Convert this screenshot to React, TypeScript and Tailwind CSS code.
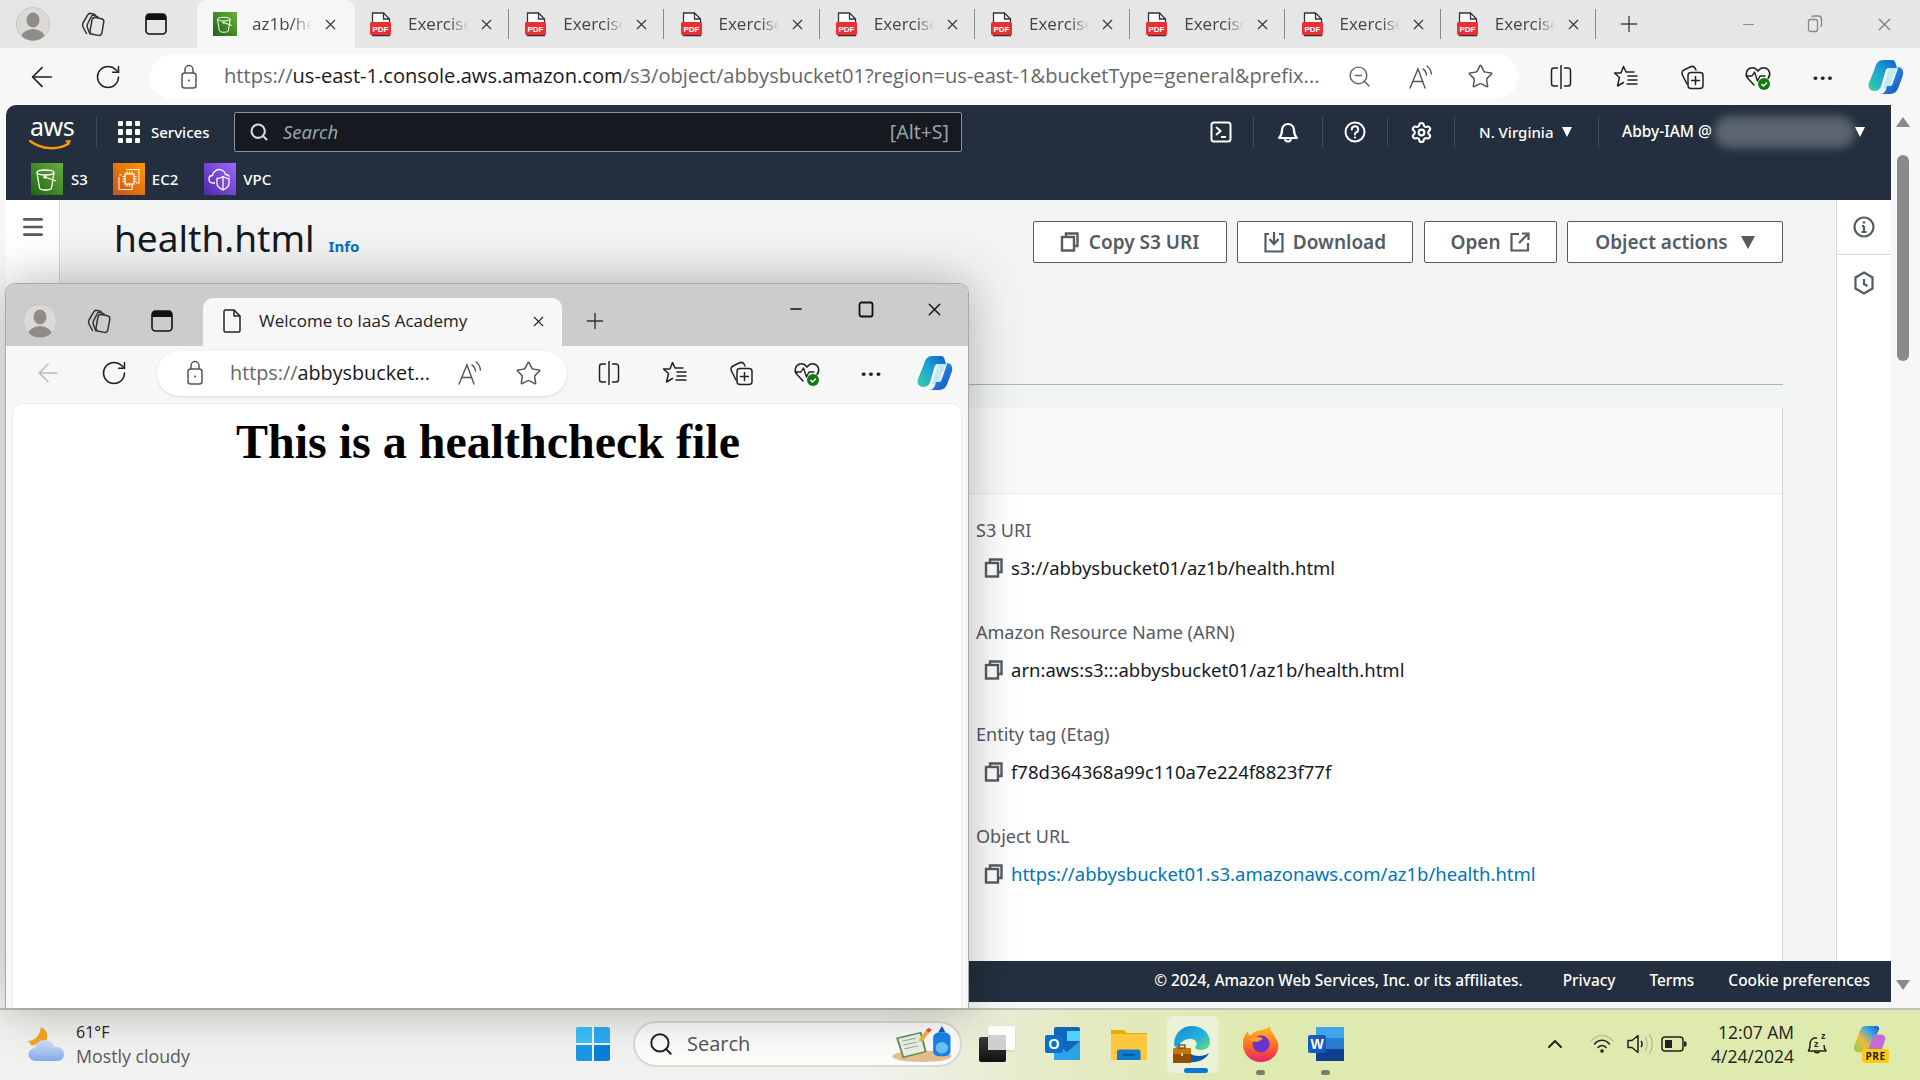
import {
  ArrowLeft,
  ChevronUp,
  Menu,
  Minus,
  Plus,
  RotateCw,
  Search,
  Settings,
  Star,
  X,
  ZoomOut,
} from "lucide-react";

const awsFont = "font-['Noto_Sans',sans-serif]";

const Avatar = () => (
  <svg width="34" height="34" viewBox="0 0 34 34">
    <defs>
      <clipPath id="av">
        <circle cx="17" cy="17" r="16.5" />
      </clipPath>
    </defs>
    <circle cx="17" cy="17" r="16.5" fill="#dcdad6" stroke="#c8c6c2" />
    <g clipPath="url(#av)" fill="#8f8b86">
      <ellipse cx="17" cy="13" rx="6.5" ry="7.5" />
      <ellipse cx="17" cy="31" rx="12" ry="9" />
    </g>
  </svg>
);

const Workspaces = () => (
  <svg width="26" height="26" viewBox="0 0 26 26" fill="none" stroke="#333" strokeWidth="1.5" strokeLinejoin="round" strokeLinecap="round">
    <path d="M15 3.500 11 2.500c-1.500-.4-2.700.3-3.400 1.600L3 12c-.8 1.500-.6 2.600 0 4l3.500 6.500" />
    <path d="M18 6 14.500 4.500c-1.500-.6-2.800 0-3.500 1.500L7.500 13c-.6 1.400-.6 2.500 0 4l2.500 6" />
    <rect x="11" y="7" width="12" height="17" rx="3" transform="rotate(10 17 15)" />
  </svg>
);

const VerticalTabs = () => (
  <svg width="24" height="24" viewBox="0 0 24 24" fill="none">
    <rect x="2" y="2" width="20" height="20" rx="3.500" stroke="#111" strokeWidth="1.600" />
    <path d="M2 6a4 4 0 0 1 4-4h12a4 4 0 0 1 4 4v2H2z" fill="#111" />
  </svg>
);

const PdfIcon = () => (
  <svg width="23" height="25" viewBox="0 0 23 25">
    <path d="M3.500 1h11l6 6v16.500H3.500z" fill="#fff" stroke="#333" strokeWidth="1.300" />
    <path d="M14.500 1v6h6" fill="none" stroke="#333" strokeWidth="1.300" />
    <rect x="1" y="10" width="21" height="13" rx="1.500" fill="#ee2d34" />
    <text x="11.500" y="19.500" textAnchor="middle" fontSize="8" fontWeight="700" fill="#fff" fontFamily="Liberation Sans, sans-serif">
      PDF
    </text>
  </svg>
);

const S3Icon = ({ size = 32 }: { size?: number }) => (
  <svg width={size} height={size} viewBox="0 0 32 32">
    <defs>
      <linearGradient id="s3g" x1="0" y1="1" x2="1" y2="0">
        <stop offset="0" stopColor="#1b660f" />
        <stop offset="1" stopColor="#6cae3e" />
      </linearGradient>
    </defs>
    <rect width="32" height="32" fill="url(#s3g)" />
    <g fill="none" stroke="#fff" strokeWidth="1.300">
      <ellipse cx="14.500" cy="9.500" rx="8.500" ry="2.500" />
      <path d="M6 9.500 8.500 25c.5 1.500 3 2 6 2s5.500-.5 6-2L23 9.500" />
      <path d="M14 14l11 4" />
      <circle cx="14" cy="14" r="1" />
    </g>
  </svg>
);

const Ec2Icon = () => (
  <svg width="32" height="32" viewBox="0 0 32 32">
    <defs>
      <linearGradient id="ec2g" x1="0" y1="1" x2="1" y2="0">
        <stop offset="0" stopColor="#c8511b" />
        <stop offset="1" stopColor="#ff9900" />
      </linearGradient>
    </defs>
    <rect width="32" height="32" fill="url(#ec2g)" />
    <g fill="none" stroke="#fff" strokeWidth="1.200">
      <path d="M13 6.500h13V20h-3" opacity=".85" />
      <path d="M6 12h3M6 26.500V14M6 26.500h13V23" opacity=".85" />
      <rect x="12" y="11" width="9" height="10" />
      <path d="M14 8.500V11M16.500 8.500V11M19 8.500V11M14 21v2.500M16.500 21v2.500M19 21v2.500M9.500 13.500H12M9.500 16H12M9.500 18.500H12M21 13.500h2.500M21 16h2.500M21 18.500h2.500" />
    </g>
  </svg>
);

const VpcIcon = () => (
  <svg width="32" height="32" viewBox="0 0 32 32">
    <defs>
      <linearGradient id="vpcg" x1="0" y1="1" x2="1" y2="0">
        <stop offset="0" stopColor="#4d27a8" />
        <stop offset="1" stopColor="#a166ff" />
      </linearGradient>
    </defs>
    <rect width="32" height="32" fill="url(#vpcg)" />
    <g fill="none" stroke="#fff" strokeWidth="1.300">
      <path d="M11 20H9c-3 0-4-2-4-4s1.500-3.500 3.500-3.500C9 9 12 6.500 15 6.500c3.500 0 6 2.500 6.500 5 1.500 0 3 .5 4 2" />
      <path d="M19 13.500c2 1.500 4 2 6 2v5c0 3-3 5-6 6.500-3-1.500-6-3.500-6-6.500v-5c2 0 4-.5 6-2z" />
      <path d="M19 13.500V27" />
    </g>
  </svg>
);

const ReadAloud = () => (
  <svg width="26" height="26" viewBox="0 0 26 26" fill="none" stroke="#555" strokeWidth="1.400" strokeLinecap="round">
    <path d="M2 24 10 5l7 19M5 17.500h10" />
    <path d="M15 5c2 1 3 3 3.500 6M19 2c2.500 1.500 4 5 4.500 8" />
  </svg>
);

const SplitScreen = () => (
  <svg width="24" height="26" viewBox="0 0 24 26" fill="none" stroke="#222" strokeWidth="1.500" strokeLinejoin="round">
    <path d="M12 1v24" />
    <path d="M9 4H5a2.500 2.500 0 0 0-2.500 2.500v13A2.500 2.500 0 0 0 5 22h4M15 4h4a2.500 2.500 0 0 1 2.500 2.500v13A2.500 2.500 0 0 1 19 22h-4" />
  </svg>
);

const FavStar = () => (
  <svg width="26" height="26" viewBox="0 0 26 26" fill="none" stroke="#222" strokeWidth="1.500" strokeLinejoin="round" strokeLinecap="round">
    <path d="M21 8h-8L10.500 2.500 8 9H1.500l5 4.500L4.500 22l6-3.500" />
    <path d="M15 12h9M15 16h9M14 20h10" />
  </svg>
);

const Collections = () => (
  <svg width="26" height="28" viewBox="0 0 26 28" fill="none" stroke="#222" strokeWidth="1.500" strokeLinejoin="round" strokeLinecap="round">
    <path d="M8 21 3.500 12c-1-2-.5-4 1.500-5l6-3c2-1 4-.5 5 1l1 2" />
    <rect x="9" y="9.500" width="15" height="16" rx="3" />
    <path d="M16.500 13.500v8M12.500 17.500h8" />
  </svg>
);

const Health = () => (
  <svg width="28" height="28" viewBox="0 0 28 28" fill="none">
    <path
      d="M10 22 4 15.500C1 12 2 6 7 5c2.500-.5 5 .5 7 3 2-2.500 4.500-3.500 7-3 5 1 6 7 3 10.500"
      stroke="#222"
      strokeWidth="1.500"
      strokeLinecap="round"
    />
    <path d="M2 13h6l2.500-4 3 9 2.500-5h5" stroke="#222" strokeWidth="1.400" strokeLinejoin="round" strokeLinecap="round" />
    <circle cx="20" cy="21" r="6" fill="#107c10" />
    <path d="m17.500 21 2 2 3.500-3.500" stroke="#fff" strokeWidth="1.400" fill="none" />
  </svg>
);

const Copilot = ({ id, size = 36 }: { id: string; size?: number }) => (
  <svg width={size} height={size} viewBox="0 0 36 36">
    <defs>
      <linearGradient id={`${id}a`} x1="0" y1="1" x2="1" y2="0">
        <stop offset="0" stopColor="#37d0a0" />
        <stop offset=".55" stopColor="#1a9fd9" />
        <stop offset="1" stopColor="#0b63c5" />
      </linearGradient>
      <linearGradient id={`${id}b`} x1="0" y1="0" x2="1" y2="1">
        <stop offset="0" stopColor="#36b4ee" />
        <stop offset="1" stopColor="#1246c4" />
      </linearGradient>
    </defs>
    <path d="M21 9h8l-8 20h-6z" fill="#bfeaf2" />
    <path d="M15 1h9c2 0 3 1 3.500 3L29 9h-8c-2 0-3 1-3.500 3l-4 14c-.8 3-3 6-7 6-5 0-7-4-5.500-8L7 9c1-5 4-8 8-8z" fill={`url(#${id}a)`} />
    <path d="M30 8c4 0 6 4 5 8l-4 11c-1.500 5-4.500 8-9 8H12c3 0 5-2 6-4.500L19 27h3c1 0 2-1 2.500-2L29 12z" fill={`url(#${id}b)`} />
  </svg>
);

const BrowserTab = () => (
  <div className="flex h-[48px] w-[155.250px] shrink-0 items-center">
    <div className="ml-[14px] flex w-[23px] shrink-0 items-center">
      <PdfIcon />
    </div>
    <span className="ml-[16px] w-[60px] overflow-hidden whitespace-nowrap text-[17px] text-[#444] [mask-image:linear-gradient(to_right,black_70%,transparent)]">
      Exercise
    </span>
    <X className="ml-[10px] shrink-0 text-[#333]" size={17} strokeWidth={1.500} />
    <div className="ml-[13px] h-[30px] w-px bg-[#8a8a8a]" />
  </div>
);

const TabStrip = () => (
  <div className="flex h-[48px] items-center bg-[#e6e6e6]">
    <div className="ml-[16px] flex w-[34px] justify-center">
      <Avatar />
    </div>
    <div className="ml-[30px] flex w-[26px] justify-center">
      <Workspaces />
    </div>
    <div className="ml-[38px] flex w-[24px] justify-center">
      <VerticalTabs />
    </div>
    <div className="ml-[29px] flex h-[48px] w-[158px] shrink-0 items-center rounded-t-[10px] bg-[#f7f7f7]">
      <div className="ml-[16px]">
        <S3Icon size={24} />
      </div>
      <span className="ml-[15px] w-[60px] overflow-hidden whitespace-nowrap text-[17px] text-[#444] [mask-image:linear-gradient(to_right,black_65%,transparent)]">
        az1b/health
      </span>
      <X className="ml-[10px] shrink-0 text-[#333]" size={17} strokeWidth={1.500} />
    </div>
    {[0, 1, 2, 3, 4, 5, 6, 7].map((i) => (
      <BrowserTab key={i} />
    ))}
    <Plus className="ml-[19px] shrink-0 text-[#444]" size={26} strokeWidth={1.300} />
    <Minus className="ml-[98px] shrink-0 text-[#888]" size={17} strokeWidth={1.500} />
    <svg className="ml-[50px] shrink-0" width="16" height="18" viewBox="0 0 16 18" fill="none" stroke="#888" strokeWidth="1.300">
      <rect x="1.500" y="4.500" width="9" height="12" rx="2" />
      <path d="M5 2.500c0-1 .5-1.500 1.500-1.500h5c2 0 3 1 3 3v6c0 1-.5 1.500-1.500 1.500" />
    </svg>
    <X className="ml-[51px] shrink-0 text-[#777]" size={21} strokeWidth={1.300} />
  </div>
);

const ToolSlot = ({ children, width = 65.600 }: { children: React.ReactNode; width?: number }) => (
  <div className="flex shrink-0 items-center justify-center" style={{ width }}>
    {children}
  </div>
);

const Lock = () => (
  <svg width="20" height="26" viewBox="0 0 20 26" fill="none" stroke="#555" strokeWidth="1.500">
    <rect x="3" y="9" width="14" height="15" rx="2.500" />
    <path d="M6 9V5.500a4 4 0 0 1 8 0V9" />
    <circle cx="10" cy="16.500" r="1" fill="#555" stroke="none" />
  </svg>
);

const Toolbar = () => (
  <div className="flex h-[57px] items-center bg-[#f7f7f7]">
    <div className="flex w-[150px] items-center">
      <ArrowLeft className="ml-[26px] text-[#222]" size={32} strokeWidth={1.300} />
      <RotateCw className="ml-[36px] text-[#222]" size={28} strokeWidth={1.300} />
    </div>
    <div className="flex h-[45px] w-[1368px] items-center rounded-full bg-white">
      <div className="ml-[29px] w-[20px]">
        <Lock />
      </div>
      <div className="ml-[25px] w-[1100px] whitespace-nowrap text-[20.100px] text-[#666]">
        https://<span className="text-[#1a1a1a]">us-east-1.console.aws.amazon.com</span>
        /s3/object/abbysbucket01?region=us-east-1&amp;bucketType=general&amp;prefix...
      </div>
      <ZoomOut className="ml-[23px] text-[#666]" size={25} strokeWidth={1.400} />
      <div className="ml-[36px]">
        <ReadAloud />
      </div>
      <Star className="ml-[33px] text-[#555]" size={27} strokeWidth={1.300} />
    </div>
    <div className="ml-[10px] flex">
      <ToolSlot>
        <SplitScreen />
      </ToolSlot>
      <ToolSlot>
        <FavStar />
      </ToolSlot>
      <ToolSlot>
        <Collections />
      </ToolSlot>
      <ToolSlot>
        <Health />
      </ToolSlot>
      <ToolSlot>
        <span className="text-[22px] font-bold leading-none tracking-[1px] text-[#222]">···</span>
      </ToolSlot>
      <div className="ml-[12px]">
        <Copilot id="mainco" />
      </div>
    </div>
  </div>
);

const NavBox = ({ children, w }: { children: React.ReactNode; w: number }) => (
  <div className="flex h-[30px] shrink-0 items-center justify-center border-r border-[#414d5c]" style={{ width: w }}>
    {children}
  </div>
);

const AwsNav = () => (
  <div className="h-[95px] shrink-0 bg-[#232f3e] text-white">
    <div className="flex h-[55px] items-center pb-[1px]">
      <div className="relative ml-[24px] h-[40px] w-[42px] shrink-0">
        <span className="absolute left-0 top-[-2px] text-[25px] leading-[32px] tracking-[-0.5px] text-white">aws</span>
        <svg className="absolute left-[-1px] top-[27px]" width="44" height="12" viewBox="0 0 44 12" fill="none">
          <path d="M1 2c12 9 28 9 38 3" stroke="#ff9900" strokeWidth="2.400" strokeLinecap="round" />
          <path d="M36 1.500 42 1l-2 5.500z" fill="#ff9900" />
        </svg>
      </div>
      <div className="ml-[24px] h-[30px] w-px shrink-0 bg-[#414d5c]" />
      <div className="ml-[21px] grid h-[22px] w-[22px] shrink-0 grid-cols-3 gap-[3px]">
        {[0, 1, 2, 3, 4, 5, 6, 7, 8].map((i) => (
          <div key={i} className="rounded-[1px] bg-white" />
        ))}
      </div>
      <span className="ml-[11px] w-[60px] shrink-0 text-[15px] font-medium">Services</span>
      <div className="ml-[23px] flex h-[40px] w-[728px] shrink-0 items-center rounded-[2px] border border-[#879596] bg-[#16191f]">
        <Search className="ml-[14px] text-[#d5dbdb]" size={20} strokeWidth={2.500} />
        <span className="ml-[14px] flex-1 text-[18.500px] italic text-[#95a5a6]">Search</span>
        <span className="mr-[12px] text-[19.500px] text-[#95a5a6]">[Alt+S]</span>
      </div>
      <div className="ml-[226px] flex items-center">
        <NavBox w={66}>
          <svg width="22" height="22" viewBox="0 0 22 22" fill="none" stroke="#fff" strokeWidth="2">
            <rect x="1.500" y="1.500" width="19" height="19" rx="2.500" />
            <path d="m6 6 4.500 4L6 14M11 16h5" />
          </svg>
        </NavBox>
        <NavBox w={69}>
          <svg width="22" height="24" viewBox="0 0 22 24" fill="none" stroke="#fff" strokeWidth="2.200" strokeLinejoin="round">
            <path d="M2 18c2-2 3-4 3-8a6 6 0 0 1 12 0c0 4 1 6 3 8z" />
            <path d="M8 18.500a3 3 0 0 0 6 0" />
          </svg>
        </NavBox>
        <NavBox w={65}>
          <svg width="22" height="22" viewBox="0 0 22 22" fill="none" stroke="#fff" strokeWidth="2">
            <circle cx="11" cy="11" r="9.500" />
            <path d="M7.800 8.500A3.200 3.200 0 1 1 12 11.500c-.8.4-1 .9-1 2" strokeLinecap="round" />
            <circle cx="11" cy="16.500" r="1.100" fill="#fff" stroke="none" />
          </svg>
        </NavBox>
        <NavBox w={67}>
          <Settings size={23} strokeWidth={2.200} />
        </NavBox>
        <div className="flex h-[30px] w-[144px] shrink-0 items-center border-r border-[#414d5c] pl-[24px] text-[15px] font-medium">
          N. Virginia
          <span className="ml-[9px] h-0 w-0 border-x-[5.500px] border-t-[10px] border-x-transparent border-t-white" />
        </div>
        <div className="relative flex h-[30px] w-[286px] shrink-0 items-center pl-[23px] text-[15.500px] font-medium">
          Abby-IAM @
          <div className="absolute left-[115px] top-[-1px] h-[32px] w-[141px] rounded-full bg-[#5b6570] blur-[5px]" />
          <span className="absolute left-[256px] top-[10px] h-0 w-0 border-x-[5.500px] border-t-[10px] border-x-transparent border-t-white" />
        </div>
      </div>
    </div>
    <div className="flex h-[40px] items-start pt-[3px] text-[15px] font-medium">
      <div className="ml-[25px] flex items-center">
        <S3Icon />
        <span className="ml-[8px] leading-[30px]">S3</span>
      </div>
      <div className="ml-[25px] flex items-center">
        <Ec2Icon />
        <span className="ml-[7px] leading-[30px]">EC2</span>
      </div>
      <div className="ml-[26px] flex items-center">
        <VpcIcon />
        <span className="ml-[7px] leading-[30px]">VPC</span>
      </div>
    </div>
  </div>
);

const CopyIcon = ({ color = "#545b64" }: { color?: string }) => (
  <svg width="20" height="20" viewBox="0 0 20 20" fill="none" stroke={color} strokeWidth="2.400">
    <path d="M6 4V1.500h11.500V14H14" />
    <rect x="2" y="5" width="12" height="13.500" />
  </svg>
);

const ActionButton = ({ children, w }: { children: React.ReactNode; w: number }) => (
  <div
    className="flex h-[42px] items-center justify-center gap-[9px] rounded-[2px] border border-[#545b64] bg-white text-[19px] font-semibold text-[#545b64]"
    style={{ width: w }}
  >
    {children}
  </div>
);

const Field = ({ label, value, link }: { label: string; value: string; link?: boolean }) => (
  <div className="h-[102px]">
    <div className="h-[24px] text-[18px] leading-[24px] text-[#545b64]">{label}</div>
    <div className="mt-[14px] flex h-[24px] items-center pl-[8px]">
      <CopyIcon />
      <span className={`ml-[7px] text-[18.500px] leading-[24px] ${link ? "text-[#0073bb]" : "text-[#16191f]"}`}>{value}</span>
    </div>
  </div>
);

const Console = () => (
  <div className={`flex h-[897px] w-[1885px] shrink-0 flex-col overflow-hidden rounded-tl-[10px] ${awsFont}`}>
    <AwsNav />
    <div className="flex h-[761px] shrink-0">
      <div className="flex w-[54px] shrink-0 justify-center border-r border-[#d5dbdb] bg-white pt-[14px]">
        <Menu className="text-[#545b64]" size={26} strokeWidth={2.500} />
      </div>
      <div className="flex min-w-0 flex-1 flex-col bg-[#f2f3f3] pl-[54px] pr-[53px]">
        <div className="flex h-[63px] shrink-0 items-end justify-between">
          <div className="mb-[-2px] flex items-baseline">
            <h1 className="text-[37px] leading-[54px] text-[#16191f]">health.html</h1>
            <span className="ml-[14px] text-[15px] font-bold text-[#0073bb]">Info</span>
          </div>
          <div className="flex gap-[10.500px]">
            <ActionButton w={194}>
              <CopyIcon />
              Copy S3 URI
            </ActionButton>
            <ActionButton w={176}>
              <svg width="20" height="22" viewBox="0 0 20 22" fill="none" stroke="#545b64" strokeWidth="2.200">
                <path d="M5 3H1.500v17.500h17V3H15M10 1v11M5.500 8l4.500 5 4.500-5" />
              </svg>
              Download
            </ActionButton>
            <ActionButton w={133}>
              Open
              <svg width="20" height="20" viewBox="0 0 20 20" fill="none" stroke="#545b64" strokeWidth="2.200">
                <path d="M9 2H1.500v16.500h16.500V11M12 1.500h6.500V8M18 2 9 11" />
              </svg>
            </ActionButton>
            <ActionButton w={216}>
              Object actions
              <span className="ml-[4px] h-0 w-0 border-x-[7px] border-t-[13px] border-x-transparent border-t-[#545b64]" />
            </ActionButton>
          </div>
        </div>
        <div className="mt-[121px] shrink-0 border-b border-[#aab7b8]" />
        <div className="mt-[23px] flex min-h-0 flex-1 flex-col border-r border-[#d5dbdb] bg-white">
          <div className="h-[86px] shrink-0 border-b border-[#eaeded] bg-[#fafafa]" />
          <div className="pl-[862px] pt-[24px]">
            <Field label="S3 URI" value="s3://abbysbucket01/az1b/health.html" />
            <Field label="Amazon Resource Name (ARN)" value="arn:aws:s3:::abbysbucket01/az1b/health.html" />
            <Field label="Entity tag (Etag)" value="f78d364368a99c110a7e224f8823f77f" />
            <Field label="Object URL" value="https://abbysbucket01.s3.amazonaws.com/az1b/health.html" link />
          </div>
        </div>
      </div>
      <div className="w-[55px] shrink-0 border-l border-[#d5dbdb] bg-white">
        <div className="flex h-[55px] items-center justify-center border-b border-[#d5dbdb]">
          <svg width="22" height="22" viewBox="0 0 22 22" fill="none" stroke="#545b64" strokeWidth="2.200">
            <circle cx="11" cy="11" r="9.500" />
            <path d="M11 10v6M8.500 16h5M9 10h2" />
            <circle cx="11" cy="6.500" r="1.300" fill="#545b64" stroke="none" />
          </svg>
        </div>
        <div className="flex h-[56px] items-center justify-center">
          <svg width="20" height="24" viewBox="0 0 20 24" fill="none" stroke="#545b64" strokeWidth="2.200">
            <path d="M10 1.500 18.500 6.500v11L10 22.500 1.500 17.500v-11z" />
            <path d="M10 8v5l3.500 2" />
          </svg>
        </div>
      </div>
    </div>
    <div className="flex h-[41px] shrink-0 items-center justify-end bg-[#232f3e] pb-[2px] pr-[21px] text-[15.400px] font-medium text-white">
      <span>© 2024, Amazon Web Services, Inc. or its affiliates.</span>
      <span className="ml-[40px]">Privacy</span>
      <span className="ml-[34px]">Terms</span>
      <span className="ml-[34px]">Cookie preferences</span>
    </div>
  </div>
);

const Scrollbar = () => (
  <div className="flex h-[897px] w-[29px] shrink-0 flex-col items-center bg-[#f7f7f7] pr-[5px]">
    <span className="mt-[12px] h-0 w-0 border-x-[7px] border-b-[10px] border-x-transparent border-b-[#8a8a8a]" />
    <div className="mt-[28px] h-[206px] w-[12px] rounded-full bg-[#8a8a8a]" />
    <span className="mt-[619px] h-0 w-0 border-x-[7px] border-t-[10px] border-x-transparent border-t-[#8a8a8a]" />
  </div>
);

const WeatherIcon = () => (
  <svg width="36" height="35" viewBox="0 0 36 35">
    <defs>
      <linearGradient id="cloud" x1="0" y1="0" x2="0" y2="1">
        <stop offset="0" stopColor="#d5e3f7" />
        <stop offset="1" stopColor="#82a9ec" />
      </linearGradient>
    </defs>
    <path d="M13 0c6 3 8 9 5 14-1 1-1 2-1 2-4 0-10 1-13 3L0 14c6 0 12-5 13-14z" fill="#f6a623" />
    <path d="M8 34c-4.500 0-7.500-3-7.500-6.500S3.500 21 7 21c1-5 5-8 10-8 4.500 0 8 2.500 9 7 5-1 10 2 10 7s-3 7-7 7z" fill="url(#cloud)" />
  </svg>
);

const WindowsLogo = () => (
  <div className="grid h-[34px] w-[34px] shrink-0 grid-cols-2 gap-[2px]">
    <div className="rounded-tl-[2px] bg-[#3cc0f5]" />
    <div className="rounded-tr-[2px] bg-[#2bacef]" />
    <div className="rounded-bl-[2px] bg-[#1d97e8]" />
    <div className="rounded-br-[2px] bg-[#0a7fd8]" />
  </div>
);

const SearchArt = () => (
  <svg width="62" height="38" viewBox="0 0 50 40" preserveAspectRatio="none">
    <ellipse cx="25" cy="33" rx="24" ry="6" fill="#e4bd8c" />
    <path d="M5 14 24 8l4 20-18 6z" fill="#e9efe4" stroke="#5b8f55" strokeWidth="1.500" />
    <path d="M9 17l11-3M10 21l11-3M11 25l11-3" stroke="#8fa58c" strokeWidth="1" />
    <path d="m22 16 6-10 3 2-6 10z" fill="#f3b33c" />
    <path d="m28 6 2-3 3 2-2 3z" fill="#e4573d" />
    <rect x="34" y="8" width="14" height="25" rx="5" fill="#1a7fe8" />
    <path d="M38 8l3-7 3 7z" fill="#0c5fc4" />
    <ellipse cx="41" cy="24" rx="5" ry="6" fill="#66c4f5" />
  </svg>
);

const TaskView = () => (
  <div className="relative h-[36px] w-[36px] shrink-0">
    <div className="absolute left-[9px] top-0 h-[24px] w-[27px] rounded-[2px] bg-white shadow-sm" />
    <div className="absolute bottom-0 left-0 h-[25px] w-[27px] rounded-[2px] bg-[linear-gradient(180deg,#3a3a3a,#111)]" />
    <div className="absolute left-[9px] top-[9px] h-[15px] w-[18px] bg-[#cfcfcf]" />
  </div>
);

const OutlookIcon = () => (
  <svg width="36" height="36" viewBox="0 0 36 36">
    <rect x="9" y="1" width="26" height="33" rx="2" fill="#1066b8" />
    <rect x="22" y="5" width="13" height="10" fill="#4fd0ff" />
    <path d="M9 15 22 26 35 15v19H9z" fill="#2ea1e8" />
    <rect x="0" y="9" width="18" height="18" rx="2" fill="#0b6fd0" />
    <text x="9" y="23" textAnchor="middle" fontSize="14" fontWeight="700" fill="#fff" fontFamily="Liberation Sans, sans-serif">
      O
    </text>
  </svg>
);

const FolderIcon = () => (
  <svg width="36" height="32" viewBox="0 0 36 32">
    <path d="M0 2h13l3 3h20v27H0z" fill="#e9a90c" />
    <rect y="6" width="36" height="26" fill="#fdc83e" />
    <path d="M6 32V24c0-1.500 1-2.500 2.500-2.500H27c1.500 0 2.500 1 2.500 2.500v8z" fill="#0d7ccb" />
    <rect x="12" y="26" width="12" height="1.500" fill="#064f88" />
  </svg>
);

const EdgeIcon = () => (
  <svg width="38" height="38" viewBox="0 0 38 38">
    <defs>
      <linearGradient id="edg1" x1="0" y1="0" x2="1" y2="1">
        <stop offset="0" stopColor="#0c86d4" />
        <stop offset=".6" stopColor="#27b4dc" />
        <stop offset="1" stopColor="#72dc6a" />
      </linearGradient>
    </defs>
    <path d="M1 18C2 7 10 1 19 1c11 0 18 8 18 16 0 5-4 8-9 8-4 0-6-2-6-3 3-2 2-7-3-8-6-1-12 3-14 9-1 1-4-1-4-5z" fill="url(#edg1)" />
    <path d="M15 37c-6-1-8-6-7-10l4-4c2 5 8 8 14 8 4 0 7-1 10-3-3 6-10 10-21 9z" fill="#0c59a4" />
    <rect x="0" y="23" width="18" height="15" rx="1" fill="#c1780f" />
    <rect x="0" y="29" width="18" height="9" fill="#8f4e08" />
    <rect x="6" y="20" width="6" height="3" fill="none" stroke="#6b3c05" strokeWidth="1.200" />
    <rect x="8" y="28" width="2" height="3" fill="#f4c46d" />
  </svg>
);

const FirefoxIcon = () => (
  <svg width="36" height="36" viewBox="0 0 36 36">
    <defs>
      <linearGradient id="ffx" x1="0" y1="0" x2="0" y2="1">
        <stop offset="0" stopColor="#ffbd2f" />
        <stop offset=".55" stopColor="#ff6a1f" />
        <stop offset="1" stopColor="#e5206f" />
      </linearGradient>
    </defs>
    <path d="M27 0c-1 4 6 10 8 17 2 9-5 19-17 19C7 36 0 28 0 18 0 12 2 8 5 5c0 3 1 4 2 5 3-4 8-6 12-6 3-1 6-2 8-4z" fill="url(#ffx)" />
    <circle cx="18" cy="18" r="8.500" fill="#6a34c9" />
    <path d="M6 14c4-4 11-4 14-1-3 1-5 3-6 3-3 0-5-1-8-2z" fill="#ff9b2f" />
  </svg>
);

const WordIcon = () => (
  <svg width="36" height="36" viewBox="0 0 36 36">
    <rect x="8" y="1" width="28" height="11" fill="#41a5ee" />
    <rect x="8" y="12" width="28" height="11" fill="#2b7cd3" />
    <rect x="8" y="23" width="28" height="12" fill="#103f91" />
    <rect x="0" y="9" width="18" height="18" rx="2" fill="#185abd" />
    <text x="9" y="23" textAnchor="middle" fontSize="14" fontWeight="700" fill="#fff" fontFamily="Liberation Sans, sans-serif">
      W
    </text>
  </svg>
);

const Taskbar = () => (
  <div className="flex h-[72px] items-center border-t-2 border-[#bfc0b8] bg-[linear-gradient(90deg,#f1f1ef_0%,#f1f1ef_45%,#e4eac3_56%,#deeaaf_66%,#dfeaad_100%)] pb-[2px] font-['Open_Sans',sans-serif]">
    <div className="ml-[28px] w-[38px] shrink-0">
      <WeatherIcon />
    </div>
    <div className="ml-[10px] w-[120px] shrink-0">
      <div className="text-[16px] leading-[24px] text-[#222]">61°F</div>
      <div className="whitespace-nowrap text-[17.800px] leading-[24px] text-[#5a5a5a]">Mostly cloudy</div>
    </div>
    <div className="ml-[380px] shrink-0">
      <WindowsLogo />
    </div>
    <div className="ml-[23px] flex h-[46px] w-[329px] shrink-0 items-center rounded-full border-2 border-[#d9d9d4] bg-[#fbfbfa]">
      <Search className="ml-[13px] text-[#222]" size={26} strokeWidth={1.800} />
      <span className="ml-[13px] flex-1 text-[20px] text-[#555]">Search</span>
      <div className="mr-[7px]">
        <SearchArt />
      </div>
    </div>
    <div className="ml-[17px] shrink-0">
      <TaskView />
    </div>
    <div className="ml-[30px] shrink-0">
      <OutlookIcon />
    </div>
    <div className="ml-[30px] shrink-0">
      <FolderIcon />
    </div>
    <div className="relative ml-[20px] flex h-[57px] w-[50px] shrink-0 items-center justify-center rounded-[6px] bg-[#ecf2d8] shadow-[3px_0_0_#e7eec9]">
      <EdgeIcon />
      <div className="absolute bottom-0 left-[17px] h-[5px] w-[24px] rounded-full bg-[#0a78d4]" />
    </div>
    <div className="relative ml-[26px] shrink-0">
      <FirefoxIcon />
      <div className="absolute bottom-[-13px] left-[13px] h-[5px] w-[9px] rounded-full bg-[#7a7d6c]" />
    </div>
    <div className="relative ml-[29px] shrink-0">
      <WordIcon />
      <div className="absolute bottom-[-13px] left-[13px] h-[5px] w-[9px] rounded-full bg-[#7a7d6c]" />
    </div>
    <ChevronUp className="ml-[199px] shrink-0 text-[#222]" size={24} strokeWidth={2} />
    <svg className="ml-[23px] shrink-0" width="24" height="20" viewBox="0 0 24 20" fill="none" strokeLinecap="round">
      <path d="M1 7c6-7.500 16-7.500 22 0" stroke="#b9c09b" strokeWidth="1.500" />
      <path d="M4.500 10c4.500-5 10.500-5 15 0M8 13.500c2.500-2.500 5.500-2.500 8 0" stroke="#222" strokeWidth="1.600" />
      <circle cx="12" cy="17" r="1.800" fill="#222" />
    </svg>
    <svg className="ml-[13px] shrink-0" width="26" height="24" viewBox="0 0 26 24" fill="none" strokeLinejoin="round">
      <path d="M1 8.500v7h4l6 5V3.500l-6 5z" stroke="#222" strokeWidth="1.500" />
      <path d="M14 9c1.500 2 1.500 4 0 6" stroke="#222" strokeWidth="1.500" />
      <path d="M18 5c3 4 3 10 0 14M22 2c4.500 6 4.500 14 0 20" stroke="#b9c09b" strokeWidth="1.300" />
    </svg>
    <svg className="ml-[8px] shrink-0" width="26" height="16" viewBox="0 0 26 16" fill="none">
      <rect x="1" y="1" width="21" height="14" rx="3" stroke="#222" strokeWidth="1.500" />
      <rect x="4" y="4" width="7" height="8" fill="#222" />
      <path d="M23 5.500h1.500a1 1 0 0 1 1 1v3a1 1 0 0 1-1 1H23z" fill="#222" />
    </svg>
    <div className="ml-[7px] w-[100px] shrink-0 text-right text-[17.500px] leading-[24px] text-[#222]">
      <div>12:07 AM</div>
      <div>4/24/2024</div>
    </div>
    <svg className="ml-[13px] shrink-0" width="22" height="26" viewBox="0 0 22 26" fill="none" stroke="#222" strokeWidth="1.500" strokeLinejoin="round">
      <path d="M1 20c2-1.500 2-3 2-7 0-3 2-6 5-6h2M17 14c0 3 .5 4.500 2 6H1" />
      <path d="M7.500 20.500a3 3 0 0 0 5 0" />
      <text x="7" y="16" fontSize="9" fill="#222" stroke="none" fontWeight="700" fontFamily="Liberation Sans, sans-serif">
        z
      </text>
      <text x="14" y="8" fontSize="9" fill="#222" stroke="none" fontWeight="700" fontFamily="Liberation Sans, sans-serif">
        z
      </text>
    </svg>
    <div className="relative ml-[24px] h-[38px] w-[36px] shrink-0">
      <svg width="34" height="30" viewBox="0 0 36 32">
        <defs>
          <linearGradient id="tco" x1="0" y1="1" x2="1" y2="0">
            <stop offset="0" stopColor="#8ad14a" />
            <stop offset=".4" stopColor="#f0b93a" />
            <stop offset=".7" stopColor="#3aa4e8" />
            <stop offset="1" stopColor="#1457d0" />
          </linearGradient>
        </defs>
        <path d="M13 1h12c2 0 3 2 3 3L18 26c-1 2-2 3-4 3H5c-3 0-5-3-4-6l6-16c1-3 3-6 6-6z" fill="url(#tco)" />
        <path d="M23 10h7c3 0 5 3 4 6l-3 9c-1 3-3 5-6 5H14l9-20z" fill="#c56bd8" />
      </svg>
      <div className="absolute bottom-0 left-[9px] flex h-[14px] w-[27px] items-center justify-center rounded-[3px] bg-[#ffc90e] text-[10px] font-bold leading-none tracking-[0.5px] text-[#222]">
        PRE
      </div>
    </div>
  </div>
);

const Popup = () => (
  <div className="absolute left-[5px] top-[283px] flex h-[725px] w-[964px] flex-col overflow-hidden rounded-t-[10px] border border-b-0 border-[#a9a9a9] bg-[#f7f7f7] shadow-[0_0_50px_rgba(0,0,0,0.3)] font-['Open_Sans',sans-serif]">
    <div className="flex h-[62px] shrink-0 items-end bg-[#cccccc]">
      <div className="flex h-[48px] items-center pb-[2px]">
        <div className="ml-[17px] w-[34px]">
          <Avatar />
        </div>
        <div className="ml-[29px] w-[26px]">
          <Workspaces />
        </div>
        <div className="ml-[38px] w-[24px]">
          <VerticalTabs />
        </div>
      </div>
      <div className="ml-[29px] flex h-[48px] w-[359px] shrink-0 items-center rounded-t-[10px] bg-[#f7f7f7] pb-[2px]">
        <svg className="ml-[19px] shrink-0" width="20" height="24" viewBox="0 0 20 24" fill="none" stroke="#222" strokeWidth="1.500" strokeLinejoin="round">
          <path d="M2 2.500A1.500 1.500 0 0 1 3.500 1H12l6 6v14.500a1.500 1.500 0 0 1-1.500 1.500h-13A1.500 1.500 0 0 1 2 21.500z" />
          <path d="M12 1v6h6" />
        </svg>
        <span className="ml-[17px] flex-1 whitespace-nowrap text-[17px] text-[#222]">Welcome to IaaS Academy</span>
        <X className="mr-[15px] text-[#222]" size={17} strokeWidth={1.600} />
      </div>
      <div className="flex h-[48px] items-center">
        <Plus className="ml-[20px] mb-[3px] text-[#333]" size={26} strokeWidth={1.300} />
        <Minus className="ml-[179px] mb-[26px] text-[#111]" size={18} strokeWidth={1.800} />
        <svg className="ml-[53px] mb-[26px]" width="16" height="17" viewBox="0 0 16 17" fill="none" stroke="#111" strokeWidth="1.800">
          <rect x="1.500" y="1.500" width="13" height="14" rx="2" />
        </svg>
        <X className="ml-[50px] mb-[26px] text-[#111]" size={21} strokeWidth={1.600} />
      </div>
    </div>
    <div className="flex h-[57px] shrink-0 items-center pb-[3px]">
      <div className="flex w-[151px] items-center">
        <ArrowLeft className="ml-[27px] text-[#bbb]" size={30} strokeWidth={1.300} />
        <RotateCw className="ml-[37px] text-[#222]" size={28} strokeWidth={1.300} />
      </div>
      <div className="flex h-[45px] w-[410px] shrink-0 items-center rounded-full bg-white shadow-sm">
        <div className="ml-[28px] w-[20px]">
          <Lock />
        </div>
        <div className="ml-[25px] w-[205px] whitespace-nowrap text-[19.800px] text-[#666]">
          https://<span className="text-[#1a1a1a]">abbysbucket...</span>
        </div>
        <div className="ml-[22px]">
          <ReadAloud />
        </div>
        <Star className="ml-[32px] text-[#555]" size={27} strokeWidth={1.300} />
      </div>
      <div className="ml-[9px] flex">
        <ToolSlot width={66}>
          <SplitScreen />
        </ToolSlot>
        <ToolSlot width={66}>
          <FavStar />
        </ToolSlot>
        <ToolSlot width={66}>
          <Collections />
        </ToolSlot>
        <ToolSlot width={65}>
          <Health />
        </ToolSlot>
        <ToolSlot width={65}>
          <span className="text-[22px] font-bold leading-none tracking-[1px] text-[#222]">···</span>
        </ToolSlot>
        <div className="ml-[13px]">
          <Copilot id="popco" />
        </div>
      </div>
    </div>
    <div className="mx-[6px] flex-1 rounded-t-[10px] border border-b-0 border-[#ececec] bg-white pl-[2px] pt-[11px]">
      <h1 className="text-center font-['Liberation_Serif',serif] text-[48px] font-bold leading-[54px] text-black">This is a healthcheck file</h1>
    </div>
  </div>
);

export default function App() {
  return (
    <div className="relative h-[1080px] w-[1920px] overflow-hidden bg-[#f7f7f7] font-['Open_Sans',sans-serif]">
      <TabStrip />
      <Toolbar />
      <div className="flex h-[903px] pl-[6px]">
        <Console />
        <Scrollbar />
      </div>
      <Taskbar />
      <Popup />
    </div>
  );
}
